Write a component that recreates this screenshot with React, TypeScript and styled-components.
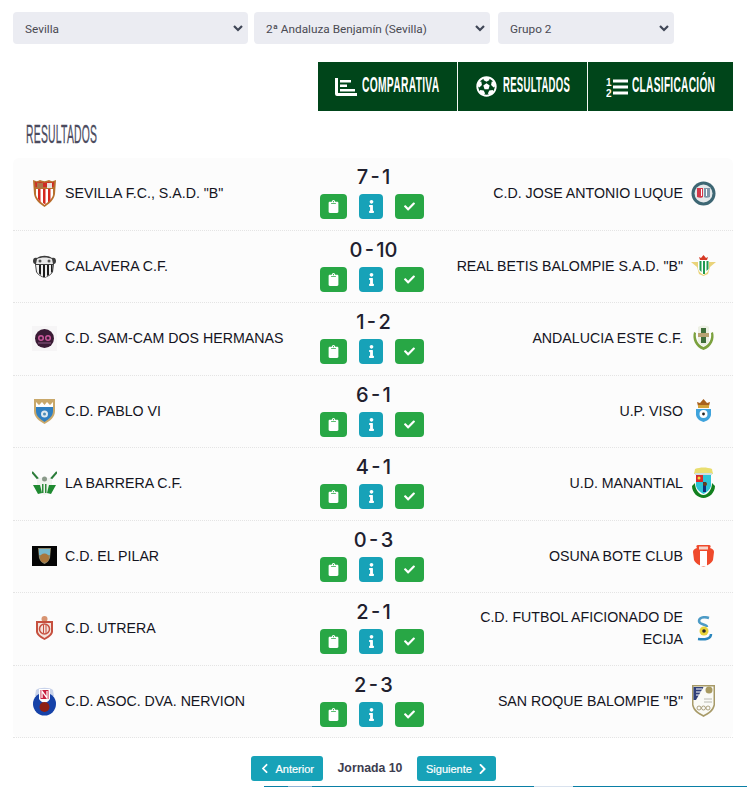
import React from "react";
import styled, { createGlobalStyle } from "styled-components";
import { FaClipboard, FaInfo, FaCheck, FaChevronLeft, FaChevronRight, FaFutbol } from "react-icons/fa";

const Global = createGlobalStyle`
  html, body { margin: 0; padding: 0; background: #fff; height: 787px; overflow: hidden; }
  * { box-sizing: border-box; }
`;

const Page = styled.div`
  width: 747px;
  height: 787px;
  padding-top: 12px;
  font-family: "Liberation Sans", Arial, sans-serif;
  overflow: hidden;
`;

const Filters = styled.div`
  display: flex;
  padding-left: 13px;
`;

const SelectWrap = styled.div<{ $w: number; $mr: number }>`
  position: relative;
  width: ${(p) => p.$w}px;
  margin-right: ${(p) => p.$mr}px;
  height: 32px;
`;

const Select = styled.select`
  appearance: none;
  width: 100%;
  height: 100%;
  border: 0;
  border-radius: 4px;
  background: #ebecf2;
  color: #4a4a52;
  font-family: Roboto, sans-serif;
  font-size: 11.8px;
  padding: 2px 12px 0;
  outline: none;
`;

const Chevron = styled.svg`
  position: absolute;
  right: 5px;
  top: 13px;
  width: 10px;
  height: 7px;
  fill: none;
  stroke: #3f4656;
  stroke-width: 2.2;
  pointer-events: none;
`;

const Tabs = styled.div`
  display: flex;
  margin: 18px 14px 0 318px;
  height: 49px;
  background: #00451a;
`;

const Tab = styled.div<{ $w: number; $gap: number; $last?: boolean }>`
  width: ${(p) => p.$w}px;
  display: flex;
  align-items: center;
  justify-content: center;
  gap: ${(p) => p.$gap}px;
  color: #fff;
  border-right: ${(p) => (p.$last ? "0" : "1px solid #f4f7f4")};
`;

const NarrowBox = styled.span<{ $w: number; $h: number }>`
  display: block;
  width: ${(p) => p.$w}px;
  height: ${(p) => p.$h}px;
  overflow: visible;
  white-space: nowrap;
`;

const NarrowText = styled.span<{ $sx: number; $size: number; $weight?: number }>`
  display: inline-block;
  font-family: "Liberation Sans", Arial, sans-serif;
  font-weight: ${(p) => p.$weight ?? 700};
  font-size: ${(p) => p.$size}px;
  line-height: 1;
  letter-spacing: 0.6px;
  transform: scaleX(${(p) => p.$sx});
  transform-origin: 0 0;
`;

const TabLabel = styled(NarrowBox)`
  margin-top: -3px;
`;

const Heading = styled.h2`
  margin: 10px 0 0 26px;
  height: 24px;
  color: #4b4b5e;
  font-weight: 400;
  -webkit-text-stroke: 0.3px #4b4b5e;
`;

const Table = styled.div`
  margin: 13px 14px 0 13px;
  background: #fcfcfc;
  border-radius: 6px;
  display: flex;
  flex-direction: column;
`;

const Row = styled.div`
  height: 72.5px;
  display: grid;
  grid-template-columns: 1fr 124px 1fr;
  align-items: center;
  padding: 0 17px 0 19px;
  border-bottom: 1px dotted #e4e4e4;
`;

const Team = styled.div<{ $right?: boolean }>`
  display: flex;
  align-items: center;
  gap: 8px;
  justify-content: ${(p) => (p.$right ? "flex-end" : "flex-start")};
  text-align: ${(p) => (p.$right ? "right" : "left")};
  padding-left: ${(p) => (p.$right ? "16px" : "0")};
  font-size: 14.2px;
  line-height: 22px;
  color: #14141e;
  margin-top: -1px;
`;

const Logo = styled.svg`
  width: 25px;
  flex: none;
  display: block;
`;

const Match = styled.div`
  display: flex;
  flex-direction: column;
  align-items: center;
  justify-content: center;
  margin: -1px 4px 0 0;
`;

const Score = styled.div`
  font-family: Inter, sans-serif;
  font-weight: 500;
  font-size: 20px;
  line-height: 20px;
  height: 27px;
  color: #20202e;
  word-spacing: -3px;
  padding-left: 3px;
`;

const Actions = styled.div`
  display: flex;
  gap: 12px;
`;

const Action = styled.div<{ $w: number; $bg: string }>`
  width: ${(p) => p.$w}px;
  height: 25px;
  border-radius: 4px;
  background: ${(p) => p.$bg};
  color: #fff;
  display: flex;
  align-items: center;
  justify-content: center;
  font-size: 13px;
`;

const Pager = styled.div`
  display: flex;
  align-items: center;
  margin: 18px 0 0 251px;
  height: 25px;
`;

const PageBtn = styled.div<{ $w: number }>`
  width: ${(p) => p.$w}px;
  height: 25px;
  padding: 0 9px;
  border-radius: 3px;
  background: #17a2b8;
  color: #fff;
  font-size: 11px;
  -webkit-text-stroke: 0.2px #fff;
  display: flex;
  align-items: center;
  gap: 6px;
`;

const PageLabel = styled.div`
  width: 94px;
  text-align: center;
  font-size: 12.3px;
  font-weight: 700;
  color: #3d3d4f;
  margin-top: -2px;
`;

const Strip = styled.div`
  margin: 5px 0 0 264px;
  height: 2px;
  background: linear-gradient(90deg, #0a7fa6 0 5%, #8fb4d6 5% 10%, #0a7fa6 10% 56%, #d8e2ee 56% 64%, #0a7fa6 64% 100%);
`;

type Crest = { h: number; node: React.ReactNode };

const crests: Record<string, Crest> = {
  sevilla: {
    h: 30,
    node: (
      <>
        <path d="M1 2c3 1.500 5 1.500 7 0 3 1.500 6 1.500 9 0 2 1.500 4 1.500 7 0l-1 14c-1 6-6 10-10.500 13C8 26 3 22 2 16z" fill="#b8702e" />
        <path d="M3 4c3 .8 4 .8 5-.3 3 1.500 6 1.500 9 0 1 1.100 2 1.100 5 .3l-.5 5h-18z" fill="#cf2b25" />
        <rect x="5" y="5" width="6" height="5" fill="#a9774a" />
        <rect x="15" y="5" width="5" height="5" fill="#e6e2dc" />
        <path d="M4 11h17v6c-1 4-5 7-8.500 10C9 24 5 21 4 17z" fill="#fff" />
        <path d="M6 11h2.500v13L6 21zM11 11h2.500v15.500l-2.500-1.500zM16 11h2.500v11L16 24.500z" fill="#d5281f" />
      </>
    ),
  },
  calavera: {
    h: 24,
    node: (
      <>
        <path d="M1 7c0-3 2-4 4-3 4-3 11-3 15 0 2-1 4 0 4 3 0 2-1 3-2 3l-1 8c-2 3-5 5-8.500 6C9 23 6 21 4 18l-1-8c-1 0-2-1-2-3z" fill="#3c3c3c" />
        <path d="M5 5c4-2 11-2 15 0l1 5H4z" fill="#e9e9e9" />
        <circle cx="8" cy="7" r="1.500" fill="#555" />
        <circle cx="17" cy="7" r="1.500" fill="#555" />
        <path d="M4 11h17l-1 7c-2 3-4 4-7.500 5.500C9 22 6 20 5 18z" fill="#f0f0f0" />
        <path d="M7 11h2v10l-2-1.500zM11 11h2v12h-2zM15 11h2v10l-2 1zM19 11h1.500v6L19 19z" fill="#1d1d1d" />
      </>
    ),
  },
  samcam: {
    h: 25,
    node: (
      <>
        <rect width="25" height="25" fill="#f6f5f6" />
        <circle cx="12.500" cy="12.500" r="9.500" fill="#3a1b35" />
        <circle cx="9" cy="12" r="3" fill="#c8579a" />
        <circle cx="16" cy="12" r="3" fill="#c8579a" />
        <circle cx="9" cy="12" r="1.500" fill="#3a1b35" />
        <circle cx="16" cy="12" r="1.500" fill="#3a1b35" />
        <path d="M6 17h13" stroke="#8c5b84" strokeWidth="1" />
      </>
    ),
  },
  pablo: {
    h: 26,
    node: (
      <>
        <path d="M2 1h21v12c0 6-5 10-10.500 13C7 23 2 19 2 13z" fill="#c9a86a" />
        <path d="M4 7h17v6c0 5-4 8-8.500 11C8 21 4 18 4 13z" fill="#2f7fc1" />
        <path d="M4 4l3 3 3-3 2.500 3L15 4l3 3 3-3v5H4z" fill="#fff" />
        <circle cx="12.500" cy="16" r="3.500" fill="#dfe9ef" />
        <circle cx="12.500" cy="16" r="1.500" fill="#4d8db8" />
      </>
    ),
  },
  barrera: {
    h: 25,
    node: (
      <>
        <path d="M0 1l7 8M25 1l-7 8" stroke="#2b7c3a" strokeWidth="2" />
        <path d="M5 8c4-2 11-2 15 0v8c-1 4-4 7-7.500 8C9 23 6 20 5 16z" fill="#f0f2ef" />
        <path d="M1 14l5 9 4-1-2-8zM24 14l-5 9-4-1 2-8z" fill="#1f8a31" />
        <path d="M10 13h1.500v9H10zM13 13h1.500v9H13z" fill="#2c8a3a" />
        <circle cx="12.500" cy="8" r="2.500" fill="#8a9a8a" />
      </>
    ),
  },
  pilar: {
    h: 20,
    node: (
      <>
        <rect width="25" height="20" fill="#050505" />
        <path d="M6 2h13l-1 10c-1 3-3 5-5.500 6C10 17 8 15 7 12z" fill="#8e8a6e" />
        <path d="M7 3h11v6H7z" fill="#78b8cc" />
        <circle cx="12.500" cy="12" r="4.500" fill="#a9763c" />
      </>
    ),
  },
  utrera: {
    h: 24,
    node: (
      <>
        <circle cx="12.500" cy="3" r="3" fill="#d89472" />
        <path d="M4 5h17v11c-1 4-5 6-8.500 8C9 22 5 20 4 16z" fill="#c6503f" />
        <path d="M6 7h13v9c-1 3-4 4-6.500 6C10 20 7 19 6 16z" fill="#f4e3dc" />
        <circle cx="12.500" cy="13" r="5" fill="none" stroke="#c6503f" strokeWidth="1.500" />
        <path d="M11 9h1v8h-1zM13.500 9h1v8h-1z" fill="#c6503f" />
      </>
    ),
  },
  nervion: {
    h: 30,
    node: (
      <>
        <path d="M4 4c3-3 14-3 17 0l1 6H3z" fill="#c9d3ea" />
        <circle cx="12.500" cy="18" r="11.500" fill="#1642a8" />
        <path d="M7 3h11v10c-1 2-3 3-5.500 4C10 16 8 15 7 13z" fill="#fff" />
        <rect x="8.500" y="4" width="8" height="9" fill="#c81e3e" />
        <path d="M10 12V5l5 7V5" stroke="#fff" strokeWidth="1.300" fill="none" />
        <circle cx="12.500" cy="21" r="5" fill="#8e1f14" />
      </>
    ),
  },
  luque: {
    h: 25,
    node: (
      <>
        <circle cx="12.500" cy="12.500" r="12" fill="#3d6673" />
        <circle cx="12.500" cy="12.500" r="9" fill="#e4e8ea" />
        <path d="M6 7h6v9c-1 1-4 1-6 0z" fill="#d4384a" />
        <path d="M13 7h6v9c-2 1-5 1-6 0z" fill="#7d96a8" />
        <path d="M10 8h1v7h-1zM15 8h1v7h-1z" fill="#fff" />
      </>
    ),
  },
  betis: {
    h: 21,
    node: (
      <>
        <path d="M9 5l-1-3 2 1 2.500-3L15 3l2-1-1 3z" fill="#d63a25" />
        <path d="M0 7h25l-6 5-2 7-4.500 2L8 19l-2-7z" fill="#e9d37a" />
        <path d="M7 6h11v8c-1 3-3 4-5.500 6C10 18 8 17 7 14z" fill="#fff" />
        <path d="M8.500 6h2v11l-2-2zM12 6h2v13h-2zM15.500 6h2v8l-2 2z" fill="#1f9a50" />
      </>
    ),
  },
  andalucia: {
    h: 26,
    node: (
      <>
        <path d="M3 7C1 14 4 22 12.500 25 21 22 24 14 22 7l-2 1c1 6-2 12-7.500 14C7 20 4 14 5 8z" fill="#7ba13e" />
        <path d="M7 2c3-2 8-2 11 0v15c-2 2-3 3-5.500 4C10 20 9 19 7 17z" fill="#edf0e4" />
        <rect x="10" y="3" width="5" height="15" fill="#3f6e3a" />
        <rect x="7" y="8" width="11" height="4" fill="#b8a272" />
      </>
    ),
  },
  viso: {
    h: 23,
    node: (
      <>
        <path d="M7 7l-1-4 3 1 3.500-4L16 4l3-1-1 4z" fill="#a8611e" />
        <rect x="7" y="6" width="11" height="3" fill="#d3a23a" />
        <path d="M5 10h15v6c-1 4-4 6-7.500 7C9 22 6 20 5 16z" fill="#3fa3dc" />
        <circle cx="12.500" cy="15" r="4" fill="#fff" />
        <circle cx="12.500" cy="15" r="1.400" fill="#222" />
      </>
    ),
  },
  manantial: {
    h: 32,
    node: (
      <>
        <path d="M4 2c5-2 12-2 17 0l1 5H3z" fill="#e9de70" />
        <path d="M4 6h17v2H4z" fill="#cfdde2" />
        <path d="M1 19c0 7 6 12 11.500 12S24 26 24 19l-3-3c0 6-4 12-8.500 12S4 22 4 16z" fill="#12801e" />
        <path d="M5 8h15v11c-1 4-4 6-7.500 8C9 25 6 23 5 19z" fill="#2cc4d6" />
        <path d="M5 8h7v7H5z" fill="#d62a2a" />
        <circle cx="8" cy="11" r="1.500" fill="#f0d93a" />
        <path d="M12 15h3v10h-3z" fill="#0f2f7a" />
        <circle cx="14" cy="17" r="2" fill="#6a3d1c" />
      </>
    ),
  },
  osuna: {
    h: 23,
    node: (
      <>
        <path d="M7 1h11c2 0 2 2 1 3 3 1 4 2 4 4l-1 8c-1 3-5 5-9.500 7C8 21 4 19 3 16L2 8c0-2 1-3 4-4-1-1-1-3 1-3z" fill="#ef4a2c" />
        <path d="M8 2.500h9v3H8z" fill="#f6d6cc" />
        <path d="M9 7h7v15c-2 .5-5 .5-7 0z" fill="#fff" />
        <path d="M4 7h5v14l-4-3zM16 7h5l-1 11-4 3z" fill="#ef4a2c" />
      </>
    ),
  },
  ecija: {
    h: 25,
    node: (
      <>
        <path d="M18 2C12 0 8 2 8 5c0 4 8 3 8 6" stroke="#4d9bc6" strokeWidth="2.500" fill="none" />
        <circle cx="13" cy="15" r="4.500" fill="#e8d33a" />
        <circle cx="13" cy="15" r="1.800" fill="#2a2a2a" />
        <path d="M20 18c0 5-6 6-13 5" stroke="#2a86bd" strokeWidth="2.500" fill="none" />
      </>
    ),
  },
  roque: {
    h: 33,
    node: (
      <>
        <path d="M1 1h23v20c-1 6-6 9-11.500 12C7 30 2 27 1 21z" fill="#a79a68" />
        <path d="M2.500 2.500h20v18c-1 5-5 8-10 10.500-5-2.500-9-5.500-10-10.500z" fill="#fafaf6" />
        <path d="M2.500 3h10L5 16H2.500z" fill="#2f3f7a" />
        <path d="M5 5h6M5 8h5M5 11h3" stroke="#fff" strokeWidth="1" />
        <circle cx="18" cy="6" r="3.500" fill="#a89a60" />
        <path d="M13 15h8M13 18h8" stroke="#a8a8a0" strokeWidth=".8" />
        <g fill="none" stroke="#9a8e66" strokeWidth=".8">
          <circle cx="8" cy="24" r="2" />
          <circle cx="12.500" cy="24" r="2" />
          <circle cx="17" cy="24" r="2" />
        </g>
      </>
    ),
  },
};

const Emblem = ({ id }: { id: string }) => {
  const c = crests[id];
  return (
    <Logo viewBox={`0 0 25 ${c.h}`} height={c.h}>
      {c.node}
    </Logo>
  );
};

const matches = [
  ["sevilla", 'SEVILLA F.C., S.A.D. "B"', "7 - 1", "C.D. JOSE ANTONIO LUQUE", "luque"],
  ["calavera", "CALAVERA C.F.", "0 - 10", 'REAL BETIS BALOMPIE S.A.D. "B"', "betis"],
  ["samcam", "C.D. SAM-CAM DOS HERMANAS", "1 - 2", "ANDALUCIA ESTE C.F.", "andalucia"],
  ["pablo", "C.D. PABLO VI", "6 - 1", "U.P. VISO", "viso"],
  ["barrera", "LA BARRERA C.F.", "4 - 1", "U.D. MANANTIAL", "manantial"],
  ["pilar", "C.D. EL PILAR", "0 - 3", "OSUNA BOTE CLUB", "osuna"],
  ["utrera", "C.D. UTRERA", "2 - 1", "C.D. FUTBOL AFICIONADO DE ECIJA", "ecija"],
  ["nervion", "C.D. ASOC. DVA. NERVION", "2 - 3", 'SAN ROQUE BALOMPIE "B"', "roque"],
];

const ChartIcon = () => (
  <svg width="22" height="18" viewBox="0 0 22 18" fill="#fff">
    <path d="M0 0h3v15h19v3H2a2 2 0 0 1-2-2z" />
    <rect x="5" y="2" width="11" height="2.500" />
    <rect x="5" y="6.500" width="7" height="2.500" />
    <rect x="5" y="11" width="15" height="2.500" />
  </svg>
);

const RankIcon = () => (
  <svg width="22" height="20" viewBox="0 0 22 20" fill="#fff">
    <text x="0" y="8.500" fontFamily="Liberation Sans" fontWeight="700" fontSize="10">1</text>
    <text x="0" y="19.500" fontFamily="Liberation Sans" fontWeight="700" fontSize="10">2</text>
    <rect x="7" y="2.500" width="15" height="3" />
    <rect x="7" y="8.500" width="15" height="3" />
    <rect x="7" y="14.500" width="15" height="3" />
  </svg>
);

const Caret = () => (
  <Chevron viewBox="0 0 10 7">
    <path d="M1 1l4 4 4-4" />
  </Chevron>
);

export default function App() {
  return (
    <Page>
      <Global />
      <Filters>
        <SelectWrap $w={235} $mr={6}>
          <Select defaultValue="Sevilla"><option>Sevilla</option></Select>
          <Caret />
        </SelectWrap>
        <SelectWrap $w={236} $mr={8}>
          <Select defaultValue="b"><option value="b">2ª Andaluza Benjamín (Sevilla)</option></Select>
          <Caret />
        </SelectWrap>
        <SelectWrap $w={176} $mr={0}>
          <Select defaultValue="g"><option value="g">Grupo 2</option></Select>
          <Caret />
        </SelectWrap>
      </Filters>
      <Tabs>
        <Tab $w={140} $gap={5}>
          <ChartIcon />
          <TabLabel $w={78} $h={22}><NarrowText $size={22} $sx={0.468}>COMPARATIVA</NarrowText></TabLabel>
        </Tab>
        <Tab $w={130} $gap={6}>
          <FaFutbol size={21} />
          <TabLabel $w={66} $h={22}><NarrowText $size={22} $sx={0.435}>RESULTADOS</NarrowText></TabLabel>
        </Tab>
        <Tab $w={145} $gap={4} $last>
          <RankIcon />
          <TabLabel $w={84} $h={22}><NarrowText $size={22} $sx={0.462}>CLASIFICACIÓN</NarrowText></TabLabel>
        </Tab>
      </Tabs>
      <Heading>
        <NarrowBox $w={71} $h={24}><NarrowText $size={25} $weight={400} $sx={0.415}>RESULTADOS</NarrowText></NarrowBox>
      </Heading>
      <Table>
        {matches.map(([l, ln, s, rn, r]) => (
          <Row key={ln}>
            <Team>
              <Emblem id={l} />
              <span>{ln}</span>
            </Team>
            <Match>
              <Score>{s}</Score>
              <Actions>
                <Action $w={27} $bg="#28a745"><FaClipboard /></Action>
                <Action $w={24} $bg="#17a2b8"><FaInfo /></Action>
                <Action $w={29} $bg="#28a745"><FaCheck size={11} /></Action>
              </Actions>
            </Match>
            <Team $right>
              <span>{rn}</span>
              <Emblem id={r} />
            </Team>
          </Row>
        ))}
      </Table>
      <Pager>
        <PageBtn $w={72}><FaChevronLeft size={11} /> Anterior</PageBtn>
        <PageLabel>Jornada 10</PageLabel>
        <PageBtn $w={79}>Siguiente <FaChevronRight size={12} /></PageBtn>
      </Pager>
      <Strip />
    </Page>
  );
}
